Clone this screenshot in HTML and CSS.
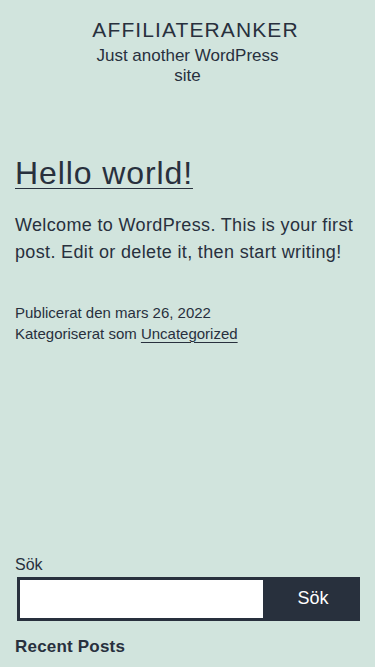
FILE: index.html
```html
<!DOCTYPE html>
<html lang="sv">
<head>
<meta charset="utf-8">
<title>AFFILIATERANKER</title>
<link rel="stylesheet" href="styles.css">
</head>
<body>
<header class="site-header">
  <p class="site-title">AFFILIATERANKER</p>
  <p class="site-desc">Just another WordPress site</p>
</header>
<main class="site-main">
  <article class="post">
    <h1 class="entry-title"><a href="#">Hello world!</a></h1>
    <p class="entry-content">Welcome to WordPress. This is your first post. Edit or delete it, then start writing!</p>
    <div class="entry-meta">
      <p class="meta-line">Publicerat den mars 26, 2022</p>
      <p class="meta-line">Kategoriserat som <a href="#">Uncategorized</a></p>
    </div>
  </article>
</main>
<aside class="widgets">
  <form class="search-form">
    <label class="search-label" for="s">Sök</label>
    <div class="search-row">
      <input class="search-input" id="s" type="search">
      <button class="search-btn" type="button">Sök</button>
    </div>
  </form>
  <h2 class="widget-title">Recent Posts</h2>
</aside>
</body>
</html>
```
FILE: styles.css
```css
html, body {
  margin: 0;
  padding: 0;
}
body {
  background: #d1e4dd;
  color: #28303d;
  font-family: "Liberation Sans", Arial, sans-serif;
  padding: 0 15px;
  height: 667px;
  overflow: hidden;
}
a {
  color: #28303d;
  text-decoration: underline;
  text-decoration-thickness: 1px;
  text-underline-offset: 3px;
}
.site-header {
  padding-top: 17px;
  text-align: center;
}
.site-title {
  margin: 0;
  padding-left: 16px;
  font-size: 21px;
  line-height: 26px;
  letter-spacing: 1.1px;
}
.site-desc {
  margin: 3px auto 0;
  max-width: 200px;
  font-size: 17px;
  line-height: 20px;
}
.site-main {
  margin-top: 67px;
}
.entry-title {
  margin: 0;
  font-size: 32px;
  font-weight: normal;
  line-height: 41.6px;
  letter-spacing: 0.9px;
}
.entry-title a {
  text-underline-offset: 4px;
}
.entry-content {
  margin: 17px 0 0;
  font-size: 18px;
  line-height: 27px;
  letter-spacing: 0.35px;
}
.entry-meta {
  margin-top: 36px;
}
.meta-line {
  margin: 0;
  font-size: 15px;
  line-height: 21px;
}
.widgets {
  margin-top: 211px;
}
.search-form {
  display: flex;
  flex-direction: column;
}
.search-label {
  font-size: 16px;
  line-height: 20px;
  margin-bottom: 2px;
}
.search-row {
  display: flex;
  padding-left: 2px;
}
.search-input {
  flex: 1;
  width: 0;
  min-width: 0;
  box-sizing: border-box;
  height: 44px;
  margin: 0;
  border: 3px solid #28303d;
  background: #fff;
  outline: none;
  padding: 0 10px;
}
.search-btn {
  flex: none;
  box-sizing: border-box;
  width: 94px;
  height: 44px;
  margin: 0;
  border: none;
  background: #28303d;
  color: #fff;
  font-family: "Liberation Sans", Arial, sans-serif;
  font-size: 18px;
  padding: 0;
}
.widget-title {
  margin: 15px 0 0;
  font-size: 17px;
  line-height: 22px;
  font-weight: bold;
  letter-spacing: 0.2px;
}
```
